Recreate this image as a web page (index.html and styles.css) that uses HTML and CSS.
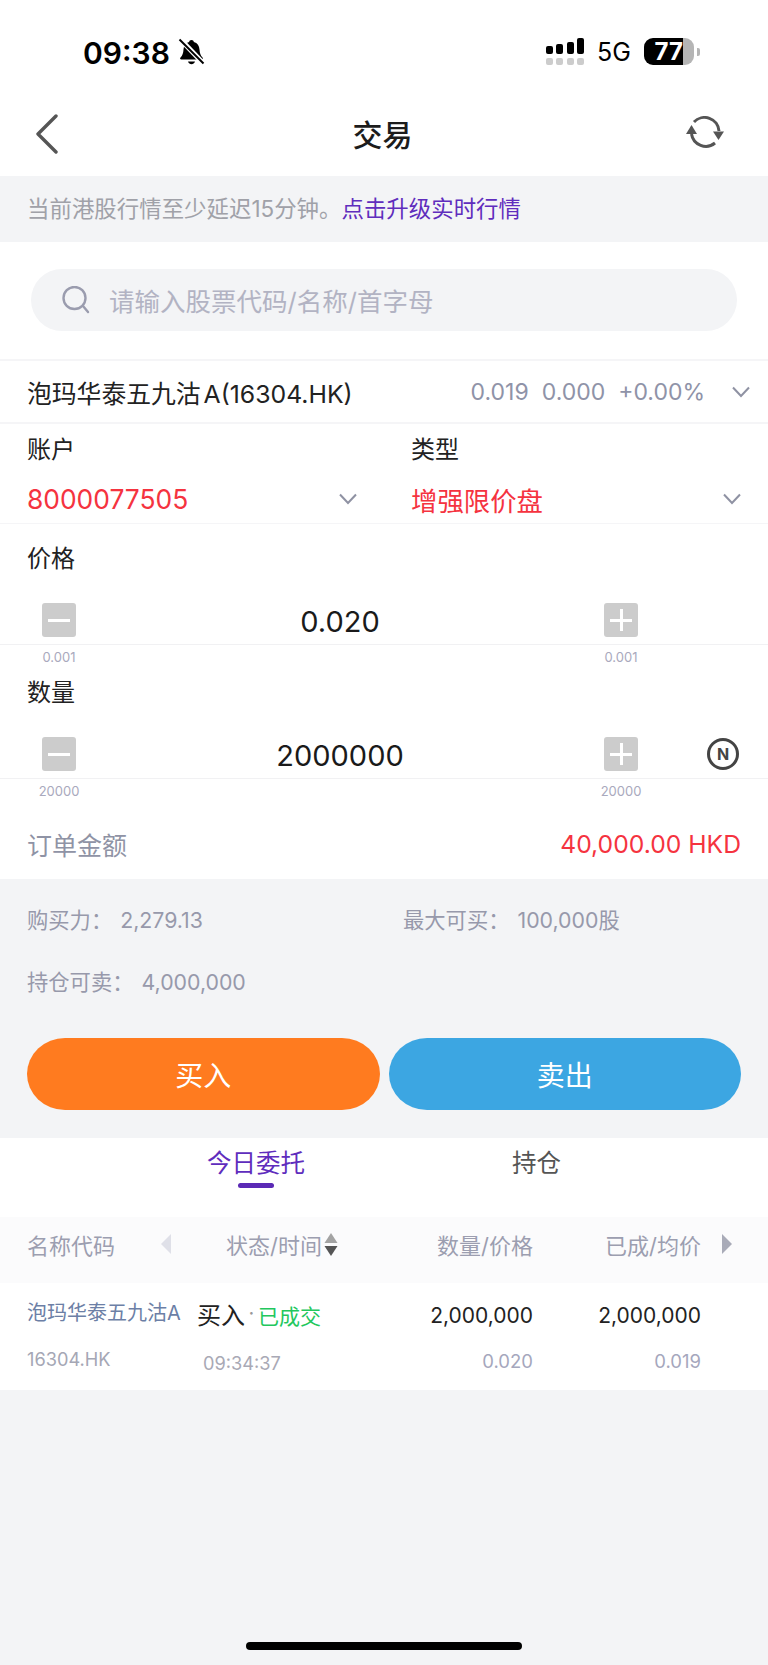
FILE: index.html
```html
<!DOCTYPE html>
<html lang="zh-CN">
<head>
    <meta charset="UTF-8">
    <meta name="viewport" content="width=device-width, initial-scale=1.0">
    <title>交易</title>
    <link rel="stylesheet" href="styles.css">
</head>
<body>
    <div class="page">
        <div class="status-bar">
            <div class="status-left">
                <span class="clock">09:38</span>
                <svg class="bell" viewBox="0 0 27 27">
                    <path d="M13.5 2c1.4 0 2.2.9 2.4 2 3.6 1 5.4 4 5.6 7.500.2 3.500 1 6 3 8 .8.800.4 2-.8 2H3.300c-1.200 0-1.600-1.200-.8-2 2-2 2.800-4.500 3-8 .2-3.500 2-6.500 5.600-7.500.2-1.100 1-2 2.400-2z" fill="#000"/>
                    <path d="M10 23.500c.6 1.700 2 2.700 3.500 2.700s2.900-1 3.500-2.700z" fill="#000"/>
                    <path d="M2 1l24 25" stroke="#fff" stroke-width="5"/>
                    <path d="M1.500 1.500l24 24" stroke="#000" stroke-width="2"/>
                </svg>
            </div>
            <div class="status-right">
                <div class="signal">
                    <div class="signal-bars">
                        <i class="bar-1"></i><i class="bar-2"></i><i class="bar-3"></i><i class="bar-4"></i>
                    </div>
                    <div class="signal-dots">
                        <i></i><i></i><i></i><i></i>
                    </div>
                </div>
                <span class="network">5G</span>
                <div class="battery"><span class="battery-level">77</span></div>
                <i class="battery-nub"></i>
            </div>
        </div>

        <header class="nav">
            <svg class="back" viewBox="0 0 24 40">
                <path d="M21 2L3 20l18 18" fill="none" stroke="#555" stroke-width="3.400" stroke-linecap="round" stroke-linejoin="round"/>
            </svg>
            <h1>交易</h1>
            <svg class="refresh" viewBox="0 0 40 34">
                <path d="M6.500 18A14.500 14.500 0 0 0 30 27" fill="none" stroke="#555" stroke-width="3"/>
                <path d="M34 15A14.500 14.500 0 0 0 9 6" fill="none" stroke="#555" stroke-width="3"/>
                <path d="M1 18h11L6.500 9z" fill="#555"/>
                <path d="M28 15.500h11L33.500 24z" fill="#555"/>
            </svg>
        </header>

        <div class="notice">当前港股行情至少延迟15分钟。<a class="notice-link">点击升级实时行情</a></div>

        <div class="search-wrap">
            <div class="search">
                <svg class="search-icon" viewBox="0 0 28 28">
                    <circle cx="12.500" cy="12" r="11" fill="none" stroke="#9a9cae" stroke-width="2.400"/>
                    <path d="M21 20l5 6" stroke="#9a9cae" stroke-width="2.400" stroke-linecap="round"/>
                </svg>
                <span class="search-placeholder">请输入股票代码/名称/首字母</span>
            </div>
        </div>

        <div class="stock-row">
            <span class="stock-name">泡玛华泰五九沽<span class="stock-class">A(16304.HK)</span></span>
            <span class="stock-quote">
                <span>0.019</span><span>0.000</span><span>+0.00%</span>
            </span>
            <svg class="chevron" viewBox="0 0 18 12"><path d="M1 1.500l8 8.500 8-8.500" /></svg>
        </div>

        <div class="account-row">
            <div class="field">
                <div class="field-label">账户</div>
                <div class="field-value">
                    <span>8000077505</span>
                    <svg class="chevron" viewBox="0 0 18 12"><path d="M1 1.500l8 8.500 8-8.500" /></svg>
                </div>
            </div>
            <div class="field">
                <div class="field-label">类型</div>
                <div class="field-value">
                    <span>增强限价盘</span>
                    <svg class="chevron" viewBox="0 0 18 12"><path d="M1 1.500l8 8.500 8-8.500" /></svg>
                </div>
            </div>
        </div>

        <section class="input-block">
            <div class="field-label">价格</div>
            <div class="stepper">
                <span class="step-btn"><i class="step-h"></i></span>
                <span class="step-value">0.020</span>
                <span class="step-btn"><i class="step-h"></i><i class="step-v"></i></span>
            </div>
            <div class="step-notes">
                <span>0.001</span>
                <span></span>
                <span>0.001</span>
            </div>
        </section>

        <section class="input-block">
            <div class="field-label">数量</div>
            <div class="stepper">
                <span class="step-btn"><i class="step-h"></i></span>
                <span class="step-value">2000000</span>
                <span class="step-btn"><i class="step-h"></i><i class="step-v"></i></span>
                <span class="n-badge">N</span>
            </div>
            <div class="step-notes">
                <span>20000</span>
                <span></span>
                <span>20000</span>
            </div>
        </section>

        <div class="amount-row">
            <span class="amount-label">订单金额</span>
            <span class="amount-value">40,000.00 HKD</span>
        </div>

        <section class="funds">
            <div class="funds-grid">
                <div class="fund"><span>购买力：</span><span>2,279.13</span></div>
                <div class="fund"><span>最大可买：</span><span>100,000股</span></div>
                <div class="fund"><span>持仓可卖：</span><span>4,000,000</span></div>
            </div>
            <div class="actions">
                <button class="buy-btn">买入</button>
                <button class="sell-btn">卖出</button>
            </div>
        </section>

        <nav class="tabs">
            <div class="tab active">今日委托<i class="tab-bar"></i></div>
            <div class="tab">持仓</div>
        </nav>

        <div class="table-head">
            <div class="head-name"><span>名称代码</span><i class="tri-left"></i></div>
            <div class="head-status">
                <span>状态/时间</span>
                <svg class="sort" viewBox="0 0 14 23">
                    <path d="M7 0l6.500 10H.5z" fill="#a3a3a3"/>
                    <path d="M.5 13h13L7 23z" fill="#555"/>
                </svg>
            </div>
            <div class="head-num">数量/价格</div>
            <div class="head-num">已成/均价</div>
            <div class="head-more"><i class="tri-right"></i></div>
        </div>

        <div class="table-row">
            <div class="cell-name">
                <div class="order-name">泡玛华泰五九沽A</div>
                <div class="order-code">16304.HK</div>
            </div>
            <div class="cell-status">
                <div class="order-state"><span class="side">买入</span><span class="dot">·</span><span class="done">已成交</span></div>
                <div class="order-time">09:34:37</div>
            </div>
            <div class="cell-num">
                <div class="num-main">2,000,000</div>
                <div class="num-sub">0.020</div>
            </div>
            <div class="cell-num">
                <div class="num-main">2,000,000</div>
                <div class="num-sub">0.019</div>
            </div>
        </div>

        <div class="filler">
            <i class="home-bar"></i>
        </div>
    </div>
</body>
</html>
```

FILE: styles.css
```css
* {
    margin: 0;
    padding: 0;
    box-sizing: border-box;
}

body {
    background-color: #fff;
    color: #222;
    font-family: Inter, 'Noto Sans CJK SC', sans-serif;
}

i {
    display: block;
}

.page {
    width: 768px;
    height: 1665px;
    display: flex;
    flex-direction: column;
    overflow: hidden;
}

/* status bar */
.status-bar {
    height: 90px;
    flex: none;
    display: flex;
    justify-content: space-between;
    padding: 38px 68px 0 83px;
}

.status-left {
    display: flex;
    align-items: flex-start;
    gap: 8px;
}

.clock {
    margin-top: 1px;
    font-size: 30px;
    line-height: 28px;
    font-weight: 600;
    color: #000;
}

.bell {
    width: 27px;
    height: 27px;
}

.status-right {
    display: flex;
    align-items: flex-start;
}

.signal-bars {
    display: flex;
    align-items: flex-end;
    gap: 3.500px;
    height: 16px;
}

.signal-bars i {
    width: 7px;
    background: #000;
    border-radius: 2px;
}

.bar-1 { height: 8px; }
.bar-2 { height: 10px; }
.bar-3 { height: 12px; }
.bar-4 { height: 16px; }

.signal-dots {
    display: flex;
    gap: 3.500px;
    margin-top: 4px;
}

.signal-dots i {
    width: 7px;
    height: 7px;
    background: #ccc;
    border-radius: 2px;
}

.network {
    margin: 2px 0 0 13px;
    width: 47px;
    font-size: 25px;
    line-height: 24px;
    color: #000;
}

.battery {
    width: 50px;
    height: 27px;
    border-radius: 9px;
    overflow: hidden;
    background: linear-gradient(90deg, #000 39px, #b5b5b5 39px);
}

.battery-level {
    display: block;
    width: 39px;
    text-align: right;
    color: #fff;
    font-size: 24px;
    line-height: 27px;
    font-weight: 700;
}

.battery-nub {
    width: 3px;
    height: 8px;
    margin: 10px 0 0 3px;
    background: #b5b5b5;
    border-radius: 0 2px 2px 0;
}

/* nav */
.nav {
    height: 86px;
    flex: none;
    display: grid;
    grid-template-columns: 1fr auto 1fr;
    align-items: center;
    padding: 0 43px 0 40px;
}

.nav h1 {
    font-size: 30px;
    font-weight: 500;
    color: #1c1c1c;
}

.back {
    width: 24px;
    height: 40px;
    margin: 2px 0 0 -5px;
}

.refresh {
    width: 40px;
    height: 34px;
    justify-self: end;
}

.notice {
    height: 66px;
    flex: none;
    display: flex;
    align-items: center;
    padding: 0 0 4px 27px;
    background: #f3f4f6;
    color: #a0a1a8;
    font-size: 22.450px;
}

.notice-link {
    color: #5f2dbd;
}

/* search */
.search-wrap {
    height: 117px;
    flex: none;
    padding: 27px 31px 28px;
}

.search {
    height: 62px;
    display: flex;
    align-items: center;
    gap: 19px;
    padding-left: 31px;
    background: #f3f4f6;
    border-radius: 31px;
}

.search-icon {
    width: 28px;
    height: 28px;
}

.search-placeholder {
    padding-bottom: 2px;
    color: #b2b3c3;
    font-size: 25.500px;
}

/* stock */
.stock-row {
    height: 65px;
    flex: none;
    display: flex;
    align-items: center;
    padding: 0 18px 0 27px;
    border-top: 2px solid #f5f5f7;
    border-bottom: 2px solid #f5f5f7;
}

.stock-name {
    font-size: 24.800px;
    color: #222;
}

.stock-class {
    margin-left: 3px;
}

.stock-quote {
    display: flex;
    gap: 13px;
    margin-left: auto;
    margin-right: 27px;
    color: #8f93a8;
    font-size: 23px;
}

.chevron {
    width: 18px;
    height: 12px;
    flex: none;
}

.chevron path {
    fill: none;
    stroke: #8f92a3;
    stroke-width: 2;
}

.account-row {
    height: 100px;
    flex: none;
    display: grid;
    grid-template-columns: 330px 330px;
    column-gap: 54px;
    padding-left: 27px;
    border-bottom: 1px solid #f5f5f7;
}

.field-label {
    font-size: 24px;
    line-height: 32px;
    color: #222;
}

.field {
    padding-top: 10px;
}

.field-value {
    display: flex;
    justify-content: space-between;
    align-items: center;
    margin-top: 17px;
    height: 32px;
    color: #f5333f;
    font-size: 26.400px;
}

/* price and quantity */
.input-block {
    flex: none;
    padding-top: 8px;
}

.input-block:first-of-type {
    padding-top: 19px;
}

.input-block .field-label {
    padding-left: 27px;
}

.stepper,
.step-notes {
    display: grid;
    grid-template-columns: 34px 1fr 34px 130px;
    padding-left: 42px;
}

.stepper {
    align-items: center;
    margin-top: 28px;
    padding-bottom: 7px;
    border-bottom: 1px solid #f1f1f3;
}

.step-btn {
    position: relative;
    height: 34px;
    background: #ccc;
    border-radius: 3px;
}

.step-h,
.step-v {
    position: absolute;
    background: #fff;
}

.step-h {
    left: 6px;
    right: 6px;
    top: 16px;
    height: 2.500px;
}

.step-v {
    top: 6px;
    bottom: 6px;
    left: 16px;
    width: 2.500px;
}

.step-value {
    height: 34px;
    text-align: center;
    font-size: 29px;
    line-height: 37px;
    color: #1a1a1a;
}

.n-badge {
    width: 32px;
    height: 32px;
    margin-left: 69px;
    border: 3px solid #444;
    border-radius: 50%;
    color: #444;
    font-size: 16px;
    font-weight: 700;
    line-height: 26px;
    text-align: center;
}

.step-notes {
    height: 24px;
    align-items: center;
    color: #a9a9bd;
    font-size: 13px;
}

.step-notes span {
    justify-self: center;
}

.amount-row {
    height: 76px;
    flex: none;
    display: flex;
    justify-content: space-between;
    align-items: center;
    padding: 6px 27px 0;
}

.amount-label {
    color: #8f93a5;
    font-size: 25px;
}

.amount-value {
    color: #f5333f;
    font-size: 24.700px;
}

/* funds and buttons */
.funds {
    height: 259px;
    flex: none;
    padding: 26px 27px 0;
    background: #f3f4f6;
}

.funds-grid {
    display: grid;
    grid-template-columns: 376px 1fr;
    row-gap: 32px;
}

.fund {
    display: flex;
    gap: 8px;
    color: #9799ab;
    font-size: 21.300px;
    line-height: 30px;
}

.actions {
    display: flex;
    gap: 9px;
    margin-top: 41px;
}

.actions button {
    flex: 1;
    height: 72px;
    border: none;
    border-radius: 38px / 36px;
    color: #fff;
    font-family: inherit;
    font-size: 28px;
}

.buy-btn {
    background-color: #ff7b1f;
}

.sell-btn {
    background-color: #3ca6e2;
}

/* tabs */
.tabs {
    height: 79px;
    flex: none;
    display: flex;
    justify-content: center;
    gap: 207px;
    padding-top: 10px;
}

.tab {
    font-size: 24.500px;
    line-height: 30px;
    color: #555;
}

.tab.active {
    color: #5f2dbd;
}

.tab-bar {
    width: 36px;
    height: 5px;
    margin: 5px auto 0;
    background: #5b2ab5;
    border-radius: 3px;
}

/* order table */
.table-head,
.table-row {
    flex: none;
    display: grid;
    grid-template-columns: 170px 163px 173px 168px 1fr;
    padding-left: 27px;
}

.table-head {
    height: 66px;
    align-items: center;
    padding-bottom: 12px;
    background: #fbfbfc;
    color: #9c9eb0;
    font-size: 22px;
}

.head-name {
    display: flex;
    align-items: center;
}

.tri-left {
    margin: 0 26px 0 auto;
    border-style: solid;
    border-width: 10px 10px 10px 0;
    border-color: transparent #dfe0e8 transparent transparent;
}

.head-status {
    display: flex;
    align-items: center;
    gap: 2px;
    padding-left: 29px;
}

.sort {
    width: 14px;
    height: 23px;
}

.head-num {
    text-align: right;
}

.tri-right {
    margin-left: 21px;
    border-style: solid;
    border-width: 10px 0 10px 10px;
    border-color: transparent transparent transparent #a9abb8;
}

.table-row {
    height: 107px;
    padding-top: 15px;
}

.order-name {
    color: #6c7fa6;
    font-size: 20px;
    line-height: 30px;
    white-space: nowrap;
}

.order-code {
    margin-top: 16px;
    color: #a5a7b5;
    font-size: 18.200px;
    line-height: 30px;
}

.order-state {
    display: flex;
    align-items: center;
    height: 30px;
}

.side {
    font-size: 24px;
}

.dot {
    width: 13px;
    text-align: center;
    color: #999;
    font-size: 20px;
}

.done {
    padding-top: 3px;
    color: #22c75d;
    font-size: 21px;
}

.order-time {
    margin: 20px 0 0 6px;
    color: #a9a9b5;
    font-size: 18.200px;
    line-height: 30px;
}

.cell-num {
    text-align: right;
}

.num-main {
    font-size: 21px;
    line-height: 30px;
    margin-top: 3px;
}

.num-sub {
    margin-top: 15px;
    color: #a5a7bd;
    font-size: 18.500px;
    line-height: 30px;
}

.filler {
    flex: 1;
    display: flex;
    flex-direction: column;
    justify-content: flex-end;
    align-items: center;
    padding-bottom: 15px;
    background: #f3f4f6;
}

.home-bar {
    width: 276px;
    height: 8px;
    background: #000;
    border-radius: 4px;
}
```
